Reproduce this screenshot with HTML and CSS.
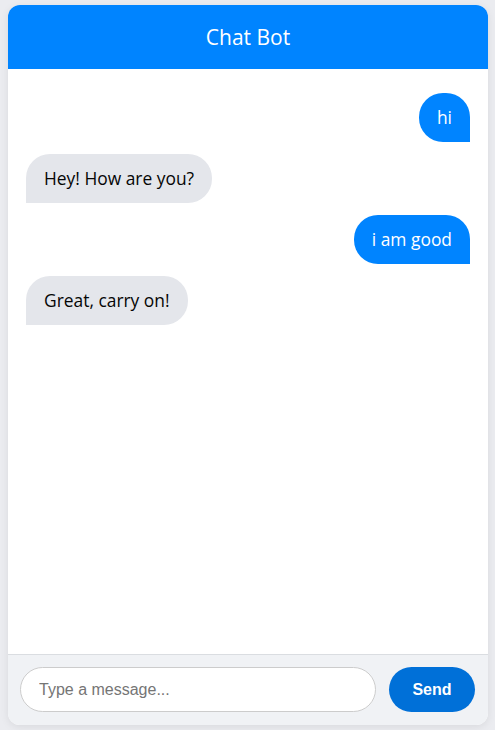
FILE: index.html
```html
<!DOCTYPE html>
<html>
<head>
<meta charset="utf-8">
<link rel="stylesheet" href="styles.css">
</head>
<body>
<div class="chat">
  <div class="chat-header">Chat Bot</div>
  <div class="chat-messages">
    <div class="msg user">hi</div>
    <div class="msg bot">Hey! How are you?</div>
    <div class="msg user">i am good</div>
    <div class="msg bot">Great, carry on!</div>
  </div>
  <div class="chat-footer">
    <input class="chat-input" type="text" placeholder="Type a message...">
    <button class="send-btn">Send</button>
  </div>
</div>
</body>
</html>
```
FILE: styles.css
```css
html, body {
  margin: 0;
  padding: 0;
  background: #ebecf0;
}
body {
  padding: 5px 7px 5px 8px;
  font-family: "Open Sans", "Noto Sans", sans-serif;
}
.chat {
  width: 480px;
  height: 720px;
  display: flex;
  flex-direction: column;
  background: #ffffff;
  border-radius: 12px;
  overflow: hidden;
  box-shadow: 0 2px 8px rgba(0,0,0,0.08);
}
.chat-header {
  height: 64px;
  flex: 0 0 64px;
  background: #0084ff;
  color: #fff;
  font-size: 21px;
  display: flex;
  align-items: center;
  justify-content: center;
}
.chat-messages {
  flex: 1;
  display: flex;
  flex-direction: column;
  padding: 18px;
}
.msg {
  margin: 6px 0;
  padding: 12px 18px;
  font-size: 17.4px;
  line-height: 25px;
  border-radius: 24px;
  max-width: 70%;
}
.msg.user {
  align-self: flex-end;
  background: #0084ff;
  color: #fff;
  border-bottom-right-radius: 0;
}
.msg.bot {
  align-self: flex-start;
  background: #e4e6eb;
  color: #050505;
  border-bottom-left-radius: 0;
}
.chat-footer {
  display: flex;
  align-items: center;
  gap: 13px;
  padding: 12px 13px 13px 12px;
  background: #f0f2f5;
  border-top: 1px solid #dadde1;
}
.chat-input {
  flex: 1;
  height: 45px;
  box-sizing: border-box;
  border: 1px solid #ccc;
  border-radius: 23px;
  padding: 0 18px;
  font-family: "Liberation Sans", Arial, sans-serif;
  font-size: 16px;
  outline: none;
  background: #fff;
}
.chat-input::placeholder {
  color: #757575;
}
.send-btn {
  width: 86px;
  height: 45px;
  border: none;
  border-radius: 23px;
  background: #0070d8;
  color: #fff;
  font-family: "Liberation Sans", Arial, sans-serif;
  font-weight: bold;
  font-size: 16px;
}
```
